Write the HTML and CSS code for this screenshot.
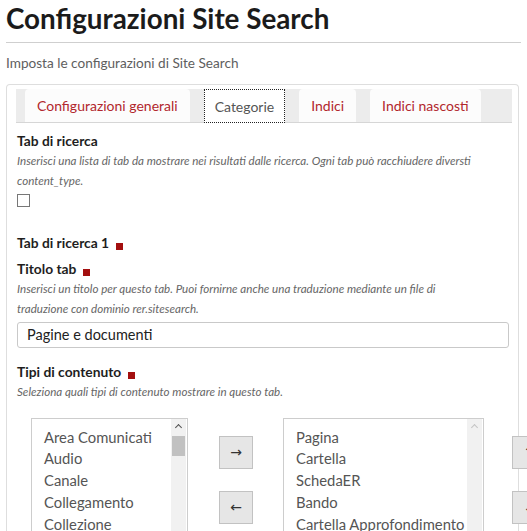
FILE: index.html
```html
<!DOCTYPE html>
<html lang="it">
<head>
<meta charset="utf-8">
<title>Configurazioni Site Search</title>
<link rel="stylesheet" href="styles.css">
</head>
<body>
<h1 class="title">Configurazioni Site Search</h1>
<hr class="rule">
<p class="lead">Imposta le configurazioni di Site Search</p>

<div class="panel">
  <div class="tabs">
    <span class="tab">Configurazioni generali</span>
    <span class="tab active">Categorie</span>
    <span class="tab">Indici</span>
    <span class="tab">Indici nascosti</span>
  </div>

  <div class="fields">
    <div class="label label-first">Tab di ricerca</div>
    <div class="help">Inserisci una lista di tab da mostrare nei risultati dalle ricerca. Ogni tab può racchiudere diversti content_type.</div>
    <span class="checkbox"></span>

    <div class="label label-group">Tab di ricerca 1<span class="req"></span></div>

    <div class="label">Titolo tab<span class="req"></span></div>
    <div class="help">Inserisci un titolo per questo tab. Puoi fornirne anche una traduzione mediante un file di<br>traduzione con dominio rer.sitesearch.</div>
    <div class="input">Pagine e documenti</div>

    <div class="label label-types">Tipi di contenuto<span class="req"></span></div>
    <div class="help">Seleziona quali tipi di contenuto mostrare in questo tab.</div>

    <div class="dual">
      <div class="list list-left">
        <div class="items">
          <div>Area Comunicati</div>
          <div>Audio</div>
          <div>Canale</div>
          <div>Collegamento</div>
          <div>Collezione</div>
        </div>
        <div class="scroll">
          <span class="arrow up"></span>
          <span class="thumb"></span>
        </div>
      </div>
      <div class="btns">
        <span class="btn">&#8594;</span>
        <span class="btn">&#8592;</span>
      </div>
      <div class="list list-right">
        <div class="items">
          <div>Pagina</div>
          <div>Cartella</div>
          <div>SchedaER</div>
          <div>Bando</div>
          <div>Cartella Approfondimento</div>
        </div>
        <div class="scroll">
          <span class="arrow up dim"></span>
        </div>
      </div>
      <div class="btns btns-order">
        <span class="btn">&#8593;</span>
        <span class="btn">&#8595;</span>
      </div>
    </div>
  </div>
</div>
</body>
</html>
```
FILE: styles.css
```css
html, body {
  margin: 0;
  background: #fff;
}
body {
  padding: 0 6px;
  font-family: Lato, "Open Sans", sans-serif;
  color: #222;
  overflow: hidden;
  height: 531px;
}
.title {
  margin: 0;
  padding-top: 2px;
  font-size: 27.8px;
  line-height: 34px;
  font-weight: 700;
  color: #1b1b1b;
}
.rule {
  margin: 6px 0 0;
  border: 0;
  border-top: 1px solid #cfcfcf;
  height: 0;
}
.lead {
  margin: 11px 0 0;
  font-size: 13.6px;
  line-height: 18px;
  color: #5e5e5e;
}
.panel {
  margin-top: 12px;
  width: 513px;
  box-sizing: border-box;
  border: 1px solid #dedede;
  border-bottom: 0;
  border-radius: 4px 4px 0 0;
  padding: 4px 6px 0 9px;
  height: 460px;
}
.tabs {
  display: flex;
  gap: 14px;
  background: #ececec;
  height: 33px;
  padding-left: 9px;
  border-bottom: 1px solid #d6d6d6;
}
.tab {
  display: flex;
  align-items: center;
  height: 33px;
  box-sizing: border-box;
  padding: 0 12px;
  background: #fcfcfc;
  border-radius: 4px 4px 0 0;
  font-size: 14px;
  color: #b2272d;
}
.tab.active {
  color: #555;
  background: #fff;
  border: 1px dotted #222;
  border-radius: 0;
  padding: 0 10px;
  height: 34px;
}
.fields {
  padding-left: 1px;
}
.label {
  font-size: 13.8px;
  font-weight: 700;
  line-height: 20px;
  color: #1e1e1e;
  display: flex;
  align-items: flex-end;
}
.label-first {
  margin-top: 8px;
}
.label-group {
  margin-top: 26px;
  margin-bottom: 6px;
}
.label-types {
  margin-top: 14px;
}
.req {
  display: inline-block;
  width: 7px;
  height: 7px;
  background: #a30f0f;
  margin: 0 0 3px 7px;
}
.help {
  max-width: 480px;
  font-size: 11.6px;
  font-style: italic;
  line-height: 19.7px;
  color: #666;
}
.checkbox {
  display: block;
  width: 11px;
  height: 11px;
  border: 1px solid #777;
  margin-top: 4px;
}
.input {
  margin-top: 3px;
  width: 492px;
  height: 26px;
  box-sizing: border-box;
  border: 1px solid #c9c9c9;
  border-radius: 3px;
  padding: 0 9px;
  font-size: 14.5px;
  line-height: 24px;
  color: #222;
}
.dual {
  display: flex;
  align-items: flex-start;
  margin-top: 16px;
  margin-left: 14px;
  width: 520px;
}
.list {
  display: flex;
  border: 1px solid #cdcdcd;
  border-bottom: 0;
  height: 130px;
  box-sizing: border-box;
  flex: none;
}
.list-left {
  width: 157px;
}
.list-right {
  width: 201px;
  margin-left: 30px;
}
.items {
  flex: 1;
  padding: 8px 0 0 12px;
  font-size: 14.8px;
  line-height: 21.8px;
  color: #555;
  white-space: nowrap;
  overflow: hidden;
}
.scroll {
  width: 15px;
  flex: none;
  background: #f1f1f1;
  position: relative;
  margin-right: 1px;
}
.arrow {
  display: block;
  height: 16px;
  position: relative;
}
.arrow::before {
  content: "";
  position: absolute;
  left: 5px;
  top: 6px;
  width: 4px;
  height: 4px;
  border-left: 1.5px solid #505050;
  border-top: 1.5px solid #505050;
  transform: rotate(45deg);
}
.arrow.dim::before {
  border-color: #c4c4c4;
}
.thumb {
  display: block;
  margin: 1px 1px 0;
  height: 20px;
  background: #c1c1c1;
}
.btns {
  display: flex;
  flex-direction: column;
  gap: 22px;
  margin: 18px 0 0 31px;
  flex: none;
}
.btns-order {
  margin-left: 28px;
}
.btn {
  display: flex;
  align-items: center;
  justify-content: center;
  width: 34px;
  height: 33px;
  box-sizing: border-box;
  background: #e6e6e6;
  border: 1px solid #c2c2c2;
  font-size: 14px;
  color: #333;
  font-family: "DejaVu Sans", sans-serif;
}
```
